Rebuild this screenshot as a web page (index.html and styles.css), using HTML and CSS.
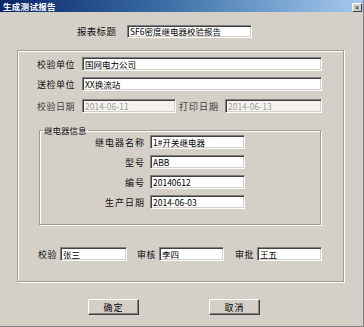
FILE: index.html
```html
<!DOCTYPE html>
<html>
<head>
<meta charset="utf-8">
<title>生成测试报告</title>
<link rel="stylesheet" href="styles.css">
</head>
<body>
<div class="window">
	<div class="titlebar">
		<span class="caption">生成测试报告</span>
		<span class="close">&#x2715;</span>
	</div>
	<div class="title-row">
		<label class="title-label">报表标题</label>
		<input class="field title-field" type="text" value="SF6密度继电器校验报告">
	</div>
	<div class="panel">
		<div class="row row1">
			<label class="lbl">校验单位</label>
			<input class="field wide" type="text" value="国网电力公司">
		</div>
		<div class="row row2">
			<label class="lbl">送检单位</label>
			<input class="field wide" type="text" value="XX换流站">
		</div>
		<div class="row row3">
			<label class="lbl dim">校验日期</label>
			<input class="field date1" type="text" value="2014-06-11" disabled>
			<label class="lbl2 dim">打印日期</label>
			<input class="field date2" type="text" value="2014-06-13" disabled>
		</div>
		<fieldset class="relay">
			<legend>继电器信息</legend>
			<div class="irow first">
				<label class="ilbl">继电器名称</label>
				<input class="field ifield" type="text" value="1#开关继电器">
			</div>
			<div class="irow">
				<label class="ilbl">型号</label>
				<input class="field ifield" type="text" value="ABB">
			</div>
			<div class="irow">
				<label class="ilbl">编号</label>
				<input class="field ifield" type="text" value="20140612">
			</div>
			<div class="irow">
				<label class="ilbl">生产日期</label>
				<input class="field ifield" type="text" value="2014-06-03">
			</div>
		</fieldset>
		<div class="signers">
			<label class="slbl">校验</label>
			<input class="field s1" type="text" value="张三">
			<label class="slbl gap1">审核</label>
			<input class="field s2" type="text" value="李四">
			<label class="slbl gap2">审批</label>
			<input class="field s3" type="text" value="王五">
		</div>
	</div>
	<div class="buttons">
		<button class="btn">确定</button>
		<button class="btn cancel">取消</button>
	</div>
</div>
</body>
</html>
```

FILE: styles.css
```css
*{margin:0;padding:0;box-sizing:border-box;}
body{font-family:"Noto Sans CJK SC","Liberation Sans",sans-serif;font-size:9px;color:#111;background:#d4d0c8;}
.window{
	width:364px;
	height:327px;
	background:#d4d0c8;
	border-right:1px solid #808080;
	border-bottom:1px solid #808080;
	overflow:hidden;
}
.titlebar{
	height:12px;
	display:flex;
	align-items:center;
	justify-content:space-between;
	padding:0 1px 0 3px;
	background:linear-gradient(to right,#0a246a 0%,#3a6ea5 45%,#a6caf0 100%);
}
.caption{
	color:#fff;
	font-weight:bold;
	font-size:8.5px;
	line-height:12px;
	letter-spacing:0.3px;
}
.close{
	width:10px;
	height:9px;
	margin-top:2px;
	background:#d4d0c8;
	border:1px solid;
	border-color:#fff #404040 #404040 #fff;
	font-size:6px;
	line-height:7px;
	text-align:center;
	font-family:"DejaVu Sans",sans-serif;
	font-weight:bold;
}

/* 输入框 */
.field{
	height:14px;
	font-family:"Noto Sans CJK SC","Liberation Sans",sans-serif;
	font-size:8.5px;
	padding:0 2px;
	background:#fff;
	border:1px solid;
	border-color:#808080 #fff #fff #808080;
	box-shadow:inset 1px 1px #404040,inset -1px -1px #d4d0c8;
	outline:none;
	color:#000;
}
.field:disabled{background:#f4f3ef;color:#a0a0a0;}

.title-row{
	display:flex;
	align-items:center;
	margin-top:12px;
	padding-left:77px;
}
.title-label{width:50px;font-size:9.5px;letter-spacing:0.3px;}
.title-field{width:125px;height:13px;}

/* 外框 */
.panel{
	margin:12px 0 0 17px;
	width:327px;
	height:232px;
	border:1px solid #a09c94;
	box-shadow:inset 1px 1px #fff,1px 1px #fff;
}
.row{display:flex;align-items:center;padding-left:19px;}
.row1{margin-top:6px;}
.row2{margin-top:6px;}
.row3{margin-top:8px;}
.lbl{width:45px;letter-spacing:0.5px;}
.dim{color:#404040;}
.wide{width:240px;}
.date1{width:94px;}
.lbl2{width:46px;margin-left:3px;letter-spacing:1px;}
.date2{width:97px;}

/* 继电器信息 */
.relay{
	margin:12px 0 0 21px;
	width:282px;
	height:100px;
	border:1px solid #a09c94;
	box-shadow:inset 1px 1px #fff,1px 1px #fff;
	min-inline-size:0;
}
.relay legend{
	margin-left:3px;
	padding:0 1px;
	font-size:8.5px;
	line-height:10px;
}
.irow{display:flex;align-items:center;margin-top:6px;}
.irow.first{margin-top:0;}
.ilbl{width:110px;text-align:right;padding-right:5px;letter-spacing:1px;font-size:9px;}
.ifield{width:95px;}

.signers{
	display:flex;
	align-items:center;
	margin-top:22px;
	padding-left:20px;
}
.slbl{width:22px;letter-spacing:0.5px;}
.gap1{margin-left:10px;}
.gap2{margin-left:11px;}
.s1{width:67px;}
.s2{width:65px;}
.s3{width:65px;}

.buttons{
	display:flex;
	margin-top:17px;
	padding-left:88px;
	gap:70px;
}
.btn{
	width:51px;
	height:16px;
	background:#d4d0c8;
	border:1px solid;
	border-color:#fff #404040 #404040 #fff;
	box-shadow:inset -1px -1px #808080;
	font-family:"Noto Sans CJK SC","Liberation Sans",sans-serif;
	font-size:9px;
	letter-spacing:1px;
	color:#000;
}
```
